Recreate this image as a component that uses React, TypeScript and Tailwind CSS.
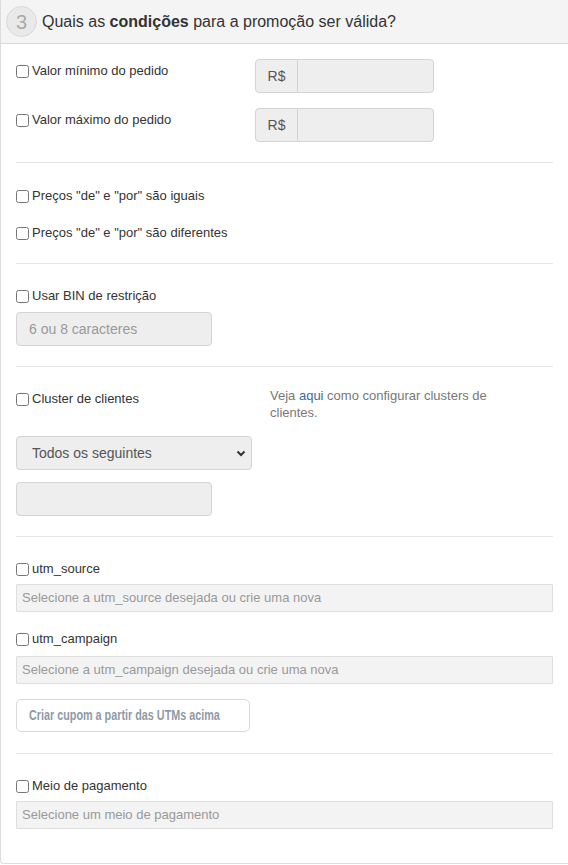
import React from "react";

const font = { fontFamily: '"Liberation Sans", Arial, Helvetica, sans-serif' };

function Check({ label }: { label: string }) {
  return (
    <label className="flex items-center gap-[3px] h-[20px] text-[13px] text-[#333] leading-[20px]">
      <input type="checkbox" className="m-0 w-[13px] h-[13px]" />
      <span>{label}</span>
    </label>
  );
}

function MoneyInput() {
  return (
    <div className="flex w-[179px] h-[34px] rounded-[4px] border border-[#d4d4d4] bg-[#eeeeee] overflow-hidden">
      <div className="w-[42px] flex items-center justify-center border-r border-[#d4d4d4] text-[14px] text-[#555]">R$</div>
      <div className="flex-1" />
    </div>
  );
}

function FlatInput({ placeholder }: { placeholder: string }) {
  return (
    <div className="h-[28px] flex items-center pl-[5px] border border-[#dedede] bg-[#f3f3f3] rounded-[1px] text-[13px] text-[#999]">
      {placeholder}
    </div>
  );
}

export default function App() {
  return (
    <div style={font} className="w-full bg-white overflow-hidden">
      <div className="border-l border-b border-[#dcdcdc] rounded-bl-[4px]">
        <div className="h-[44px] bg-[#f4f4f4] border-b border-[#dadada] flex items-center pl-[5px]">
          <div className="w-[31px] h-[31px] rounded-full bg-[#e9e9e9] border border-[#d9d9d9] flex items-center justify-center text-[20px] text-[#a9a9a9]">
            3
          </div>
          <div className="ml-[5px] text-[16px] text-[#333]">
            Quais as <b>condições</b> para a promoção ser válida?
          </div>
        </div>

        <div className="pl-[15px] pr-[15px]">
          <div className="pt-[15px] pb-[20px] flex flex-col gap-[15px]">
            <div className="flex items-start">
              <div className="w-[239px] pt-[2px]">
                <Check label="Valor mínimo do pedido" />
              </div>
              <MoneyInput />
            </div>
            <div className="flex items-start">
              <div className="w-[239px] pt-[2px]">
                <Check label="Valor máximo do pedido" />
              </div>
              <MoneyInput />
            </div>
          </div>

          <div className="border-t border-[#e6e6e6] pt-[23px] pb-[20px] flex flex-col gap-[17px]">
            <Check label={'Preços "de" e "por" são iguais'} />
            <Check label={'Preços "de" e "por" são diferentes'} />
          </div>

          <div className="border-t border-[#e6e6e6] pt-[22px] pb-[20px]">
            <Check label="Usar BIN de restrição" />
            <div className="mt-[6px] w-[196px] h-[34px] rounded-[4px] border border-[#d4d4d4] bg-[#eeeeee] flex items-center pl-[12px] text-[14px] text-[#999]">
              6 ou 8 caracteres
            </div>
          </div>

          <div className="border-t border-[#e6e6e6] pt-[22px] pb-[20px]">
            <div className="flex items-start">
              <div className="w-[254px]">
                <Check label="Cluster de clientes" />
              </div>
              <p className="w-[232px] -mt-[2px] text-[13px] leading-[17px] text-[#777]">
                Veja <a className="text-[#3b6a9c]">aqui</a> como configurar clusters de clientes.
              </p>
            </div>
            <div className="mt-[15px] w-[236px] h-[34px] rounded-[4px] border border-[#d4d4d4] bg-[#eeeeee] flex items-center justify-between pl-[15px] pr-[5px] text-[14px] text-[#555]">
              <span>Todos os seguintes</span>
              <svg width="10" height="10" viewBox="0 0 10 10">
                <path d="M1.5 3.5 L5 7 L8.5 3.5" fill="none" stroke="#333" strokeWidth="2" />
              </svg>
            </div>
            <div className="mt-[12px] w-[196px] h-[34px] rounded-[4px] border border-[#d4d4d4] bg-[#eeeeee]" />
          </div>

          <div className="border-t border-[#e6e6e6] pt-[22px] pb-[21px]">
            <Check label="utm_source" />
            <div className="mt-[5px]">
              <FlatInput placeholder="Selecione a utm_source desejada ou crie uma nova" />
            </div>
            <div className="mt-[17px]">
              <Check label="utm_campaign" />
            </div>
            <div className="mt-[7px]">
              <FlatInput placeholder="Selecione a utm_campaign desejada ou crie uma nova" />
            </div>
            <div className="mt-[15px] w-[234px] h-[33px] rounded-[5px] border border-[#dadada] bg-white flex items-center pl-[12px] overflow-hidden">
              <span className="inline-block whitespace-nowrap origin-left [transform:scaleX(0.72)] text-[15px] font-bold text-[#8e9aa6]">
                Criar cupom a partir das UTMs acima
              </span>
            </div>
          </div>

          <div className="border-t border-[#e6e6e6] pt-[22px] pb-[34px]">
            <Check label="Meio de pagamento" />
            <div className="mt-[5px]">
              <FlatInput placeholder="Selecione um meio de pagamento" />
            </div>
          </div>
        </div>
      </div>
    </div>
  );
}
